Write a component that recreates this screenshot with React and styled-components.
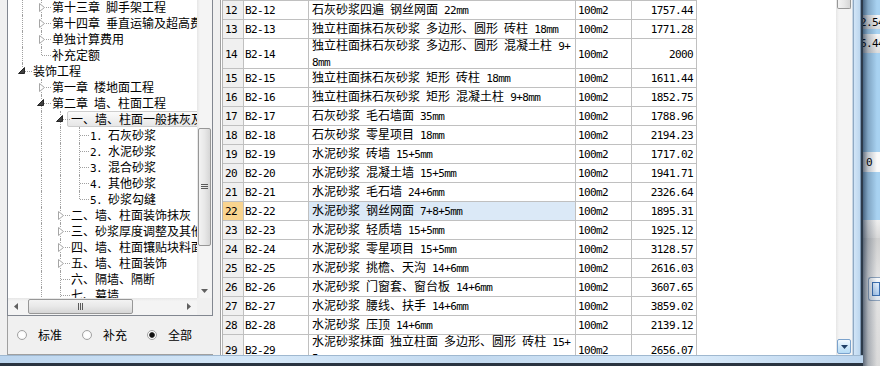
import React from "react";
import styled, { createGlobalStyle, css } from "styled-components";

const GlobalStyle = createGlobalStyle`
  html, body { margin: 0; padding: 0; }
  body {
    background: #f0f0f0;
    overflow: hidden;
    font-family: "Noto Sans CJK SC", "Liberation Sans", sans-serif;
    font-size: 12px;
    color: #000;
  }
`;

const HAN_SPLIT = /([\u2e80-\u9fff\uff00-\uffef]+)/;
const HAN_TEST = /^[\u2e80-\u9fff\uff00-\uffef]+$/;

const Han = styled.span`
  font-family: "Noto Sans CJK SC", sans-serif;
  font-size: 12px;
`;

const Latin = styled.span`
  font-family: "DejaVu Sans Mono", "Liberation Mono", monospace;
  font-size: 11px;
  letter-spacing: -0.6px;
  white-space: pre;
`;

function Mixed({ text }) {
  return text
    .split(HAN_SPLIT)
    .filter(Boolean)
    .map((run, i) =>
      HAN_TEST.test(run) ? <Han key={i}>{run}</Han> : <Latin key={i}>{run}</Latin>
    );
}

/* ---------- window frame ---------- */

const Screen = styled.div`
  display: flex;
  width: 880px;
  height: 366px;
  overflow: hidden;
`;

const Dialog = styled.div`
  display: flex;
  flex-direction: column;
  flex: none;
  width: 863px;
`;

const Body = styled.div`
  display: flex;
  height: 355px;
`;

const Client = styled.div`
  display: flex;
  width: 853px;
  background: #f0f0f0;
`;

const RightFrame = styled.div`
  width: 10px;
  background: linear-gradient(
    to right,
    #8fa9c4 0 1px,
    #d2e5f7 1px,
    #bcd6ee 7px,
    #7d98b4 7px 8px,
    #2c3a4a 8px
  );
`;

const BottomFrame = styled.div`
  height: 11px;
  background:
    linear-gradient(to bottom, #9fb8d0 0 1px, transparent 1px 8px, #2a3441 8px),
    linear-gradient(to right, #bcd5ee, #d6e8f8 30%, #c2d9ef 55%, #d9eaf9 80%, #bcd5ee);
`;

/* ---------- left tree panel ---------- */

const LeftPanel = styled.div`
  display: flex;
  flex-direction: column;
  flex: none;
  width: 213px;
  padding-left: 7px;
  box-sizing: border-box;
`;

const TreeBox = styled.div`
  display: flex;
  flex-direction: column;
  height: 316px;
  border: 1px solid #828790;
  border-top: none;
  box-sizing: border-box;
  background: #fff;
`;

const TreeBody = styled.div`
  display: flex;
  height: 298px;
`;

const TreeView = styled.div`
  flex: 1;
  overflow: hidden;
`;

const TreeList = styled.div`
  margin-top: -1px;
  padding-left: 5px;
`;

const TreeRow = styled.div`
  display: flex;
  height: 16px;
  white-space: nowrap;
`;

const Guide = styled.span`
  position: relative;
  flex: none;
  width: 19px;
  ${(p) =>
    p.$line &&
    css`
      &::before {
        content: "";
        position: absolute;
        left: 9px;
        top: 0;
        bottom: 0;
        border-left: 1px dotted #a0a0a0;
      }
    `}
`;

const Joint = styled.span`
  position: relative;
  flex: none;
  width: 19px;
  &::before {
    content: "";
    position: absolute;
    left: 9px;
    top: 0;
    bottom: ${(p) => (p.$last ? "8px" : "0")};
    border-left: 1px dotted #a0a0a0;
  }
  &::after {
    content: "";
    position: absolute;
    left: 10px;
    top: 8px;
    width: 9px;
    border-top: 1px dotted #a0a0a0;
  }
`;

const Expander = styled.span`
  position: absolute;
  z-index: 1;
  left: ${(p) => (p.$open ? "5px" : "7px")};
  top: 4px;
  display: flex;
  background: #fff;
`;

const Label = styled.span`
  display: block;
  height: 16px;
  line-height: 15px;
  padding: 0 2px 0 1px;
  box-sizing: border-box;
  ${(p) =>
    p.$selected &&
    css`
      margin-left: -3px;
      padding-left: 3px;
      border: 1px solid #cdcdcd;
      border-radius: 2px;
      line-height: 13px;
      background: linear-gradient(#fbfbfb, #e6e6e6);
    `}
`;

const ScrollV = styled.div`
  display: flex;
  flex-direction: column;
  flex: none;
  width: ${(p) => p.$w}px;
  background: linear-gradient(to right, #e6e6e6, #f4f4f4 3px, #f4f4f4);
`;

const ThumbV = styled.div`
  margin: ${(p) => p.$top}px 1px 0;
  height: ${(p) => p.$h}px;
  box-sizing: border-box;
  border: 1px solid #979797;
  border-radius: ${(p) => (p.$top === 0 ? "0 0 2px 2px" : "2px")};
  ${(p) => p.$top === 0 && "border-top: none;"}
  background: linear-gradient(to right, #f3f3f3, #e8e8e8 50%, #d6d6d6);
  display: flex;
  align-items: center;
  justify-content: center;
`;

const ArrowBtn = styled.div`
  display: flex;
  align-items: center;
  justify-content: center;
  flex: none;
  width: ${(p) => p.$w || 15}px;
  height: ${(p) => p.$h || 15}px;
  margin-top: ${(p) => (p.$push ? "auto" : "0")};
  box-sizing: border-box;
  ${(p) =>
    p.$hot &&
    css`
      margin: auto 1px 1px;
      width: 14px;
      border: 1px solid #7ba2cc;
      border-radius: 2px;
      background: linear-gradient(#f4fafe, #cfe8f9 50%, #b6dcf6);
    `}
`;

const HBarRow = styled.div`
  display: flex;
  height: 17px;
`;

const ScrollH = styled.div`
  display: flex;
  align-items: center;
  flex: 1;
  background: linear-gradient(#e6e6e6, #f4f4f4 3px, #f4f4f4);
`;

const ThumbH = styled.div`
  display: flex;
  align-items: center;
  justify-content: center;
  margin-left: 4px;
  width: 105px;
  height: 15px;
  box-sizing: border-box;
  border: 1px solid #979797;
  border-radius: 2px;
  background: linear-gradient(#f3f3f3, #e8e8e8 50%, #d6d6d6);
`;

const Corner = styled.div`
  width: 15px;
  background: #f0f0f0;
`;

const RadioBar = styled.div`
  display: flex;
  align-items: center;
  flex: 1;
  padding-left: 9px;
  border-left: 1px solid #a0a0a0;
  border-bottom: 1px solid #a0a0a0;
`;

const RadioItem = styled.label`
  display: flex;
  align-items: center;
  gap: 11px;
  width: 65px;
  line-height: 16px;
`;

const RadioDot = styled.span`
  width: 10px;
  height: 10px;
  box-sizing: border-box;
  border-radius: 50%;
  border: 1px solid #a2a2a2;
  background: ${(p) =>
    p.$checked
      ? "radial-gradient(circle, #111 0 2px, #555 2.6px, #fff 3.2px)"
      : "radial-gradient(circle, #fff 0 2px, #f0f0f0)"};
`;

/* ---------- splitter + grid ---------- */

const Splitter = styled.div`
  width: 7px;
  flex: none;
`;

const GridPanel = styled.div`
  display: flex;
  flex: 1;
  border-right: 1px solid #c9d6e3;
`;

const GridView = styled.div`
  width: 616px;
  box-sizing: border-box;
  padding-left: 1px;
  border-left: 1px solid #a0a0a0;
  background: #fff;
  overflow: hidden;
`;

const Table = styled.div`
  width: fit-content;
  border-left: 1px solid #b4b4b4;
  border-top: 1px solid #c0c0c0;
`;

const GridRow = styled.div`
  display: flex;
  height: ${(p) => (p.$tall ? 29 : 18)}px;
  border-bottom: 1px solid #c0c0c0;
`;

const Cell = styled.div`
  display: flex;
  flex-direction: column;
  justify-content: center;
  align-items: ${(p) => (p.$right ? "flex-end" : "flex-start")};
  flex: none;
  width: ${(p) => p.$w}px;
  box-sizing: border-box;
  padding: 0 ${(p) => (p.$right ? 3 : 0)}px 0 ${(p) => p.$pad || 0}px;
  border-right: 1px solid #c0c0c0;
  overflow: hidden;
  white-space: nowrap;
  background: ${(p) => p.$bg || "transparent"};
`;

const Line = styled.span`
  display: block;
  line-height: 14px;
`;

/* ---------- the window behind ---------- */

const Behind = styled.div`
  position: relative;
  display: flex;
  flex-direction: column;
  flex: 1;
  overflow: hidden;
  &::after {
    content: "";
    position: absolute;
    inset: 0;
    background: linear-gradient(
      to right,
      rgba(8, 28, 55, 0.6),
      rgba(8, 28, 55, 0.25) 5px,
      rgba(8, 28, 55, 0) 14px
    );
    pointer-events: none;
  }
`;

const BehindPart = styled.div`
  display: flex;
  flex-direction: column;
  height: ${(p) => (p.$h ? `${p.$h}px` : "auto")};
  flex: ${(p) => (p.$h ? "none" : "1")};
  background: ${(p) => p.$bg};
`;

const BehindCell = styled.div`
  margin-top: ${(p) => p.$gap}px;
  height: ${(p) => p.$h}px;
  display: flex;
  align-items: center;
  text-indent: -3px;
  overflow: hidden;
  white-space: nowrap;
  background: ${(p) => p.$bg || "linear-gradient(#f6f6f6, #dcdcdc)"};
`;

const BehindButton = styled.div`
  margin: 5px 0 0 5px;
  height: 22px;
  border: 1px solid #8da2bb;
  border-right: none;
  border-radius: 3px 0 0 3px;
  background: linear-gradient(#f7f9fb, #dfe6ee);
  display: flex;
  align-items: center;
  padding-left: 3px;
`;

const BlueBox = styled.span`
  width: 12px;
  height: 12px;
  border: 1px solid #3c6fb0;
  background: linear-gradient(#e2eefb, #a8c8ec);
`;

/* ---------- icons ---------- */

const Closed = () => (
  <svg width="6" height="9" viewBox="0 0 6 9">
    <path d="M0.5 0.5 L5.5 4.5 L0.5 8.5 Z" fill="#fff" stroke="#a6a6a6" />
  </svg>
);

const Open = () => (
  <svg width="7" height="7" viewBox="0 0 7 7">
    <path d="M6.5 0.5 L6.5 6.5 L0.5 6.5 Z" fill="#404040" stroke="#262626" />
  </svg>
);

const Tri = ({ dir, color = "#4d4d4d" }) => {
  const d = {
    down: "M0 0 L7 0 L3.5 4 Z",
    left: "M4 0 L4 7 L0 3.5 Z",
    right: "M0 0 L0 7 L4 3.5 Z",
  }[dir];
  const w = dir === "down" ? 7 : 4;
  const h = dir === "down" ? 4 : 7;
  return (
    <svg width={w} height={h} viewBox={`0 0 ${w} ${h}`}>
      <path d={d} fill={color} />
    </svg>
  );
};

const GripV = () => (
  <svg width="7" height="6" viewBox="0 0 7 6">
    <path d="M0 0.5H7M0 2.5H7M0 4.5H7" stroke="#5a5a5a" />
  </svg>
);

const GripH = () => (
  <svg width="6" height="7" viewBox="0 0 6 7">
    <path d="M0.5 0V7M2.5 0V7M4.5 0V7" stroke="#5a5a5a" />
  </svg>
);

/* ---------- data ---------- */

const treeItems = [
  { text: "第十三章 脚手架工程", guides: [true], state: "closed" },
  { text: "第十四章 垂直运输及超高费", guides: [true], state: "closed" },
  { text: "单独计算费用", guides: [true], state: "closed" },
  { text: "补充定额", guides: [true], last: true },
  { text: "装饰工程", guides: [], state: "open", last: true },
  { text: "第一章 楼地面工程", guides: [false], state: "closed" },
  { text: "第二章 墙、柱面工程", guides: [false], state: "open" },
  { text: "一、墙、柱面一般抹灰及其他", guides: [false, true], state: "open", selected: true },
  { text: "1. 石灰砂浆", guides: [false, true, true] },
  { text: "2. 水泥砂浆", guides: [false, true, true] },
  { text: "3. 混合砂浆", guides: [false, true, true] },
  { text: "4. 其他砂浆", guides: [false, true, true] },
  { text: "5. 砂浆勾缝", guides: [false, true, true], last: true },
  { text: "二、墙、柱面装饰抹灰", guides: [false, true], state: "closed" },
  { text: "三、砂浆厚度调整及其他", guides: [false, true], state: "closed" },
  { text: "四、墙、柱面镶贴块料面层", guides: [false, true], state: "closed" },
  { text: "五、墙、柱面装饰", guides: [false, true], state: "closed" },
  { text: "六、隔墙、隔断", guides: [false, true] },
  { text: "七、幕墙", guides: [false, true] },
];

const rows = [
  ["12", "B2-12", ["石灰砂浆四遍 钢丝网面 22mm"], "1757.44"],
  ["13", "B2-13", ["独立柱面抹石灰砂浆 多边形、圆形 砖柱 18mm"], "1771.28"],
  ["14", "B2-14", ["独立柱面抹石灰砂浆 多边形、圆形 混凝土柱 9+", "8mm"], "2000"],
  ["15", "B2-15", ["独立柱面抹石灰砂浆 矩形 砖柱 18mm"], "1611.44"],
  ["16", "B2-16", ["独立柱面抹石灰砂浆 矩形 混凝土柱 9+8mm"], "1852.75"],
  ["17", "B2-17", ["石灰砂浆 毛石墙面 35mm"], "1788.96"],
  ["18", "B2-18", ["石灰砂浆 零星项目 18mm"], "2194.23"],
  ["19", "B2-19", ["水泥砂浆 砖墙 15+5mm"], "1717.02"],
  ["20", "B2-20", ["水泥砂浆 混凝土墙 15+5mm"], "1941.71"],
  ["21", "B2-21", ["水泥砂浆 毛石墙 24+6mm"], "2326.64"],
  ["22", "B2-22", ["水泥砂浆 钢丝网面 7+8+5mm"], "1895.31"],
  ["23", "B2-23", ["水泥砂浆 轻质墙 15+5mm"], "1925.12"],
  ["24", "B2-24", ["水泥砂浆 零星项目 15+5mm"], "3128.57"],
  ["25", "B2-25", ["水泥砂浆 挑檐、天沟 14+6mm"], "2616.03"],
  ["26", "B2-26", ["水泥砂浆 门窗套、窗台板 14+6mm"], "3607.65"],
  ["27", "B2-27", ["水泥砂浆 腰线、扶手 14+6mm"], "3859.02"],
  ["28", "B2-28", ["水泥砂浆 压顶 14+6mm"], "2139.12"],
  ["29", "B2-29", ["水泥砂浆抹面 独立柱面 多边形、圆形 砖柱 15+", "5mm"], "2656.07"],
];

const CURRENT = "22";

/* ---------- parts ---------- */

function TreeItem({ item }) {
  return (
    <TreeRow>
      {item.guides.map((on, i) => (
        <Guide key={i} $line={on} />
      ))}
      <Joint $last={item.last}>
        {item.state && (
          <Expander $open={item.state === "open"}>
            {item.state === "open" ? <Open /> : <Closed />}
          </Expander>
        )}
      </Joint>
      <Label $selected={item.selected}>
        <Mixed text={item.text} />
      </Label>
    </TreeRow>
  );
}

function TreePanel() {
  return (
    <LeftPanel>
      <TreeBox>
        <TreeBody>
          <TreeView>
            <TreeList>
              {treeItems.map((item, i) => (
                <TreeItem key={i} item={item} />
              ))}
            </TreeList>
          </TreeView>
          <ScrollV $w={15}>
            <ThumbV $top={128} $h={118}>
              <GripV />
            </ThumbV>
            <ArrowBtn $push>
              <Tri dir="down" color="#606060" />
            </ArrowBtn>
          </ScrollV>
        </TreeBody>
        <HBarRow>
          <ScrollH>
            <ArrowBtn $w={16}>
              <Tri dir="left" color="#606060" />
            </ArrowBtn>
            <ThumbH>
              <GripH />
            </ThumbH>
            <ArrowBtn $w={16} $push style={{ marginLeft: "auto", marginTop: 0 }}>
              <Tri dir="right" color="#606060" />
            </ArrowBtn>
          </ScrollH>
          <Corner />
        </HBarRow>
      </TreeBox>
      <RadioBar>
        <RadioItem>
          <RadioDot />
          <Han>标准</Han>
        </RadioItem>
        <RadioItem>
          <RadioDot />
          <Han>补充</Han>
        </RadioItem>
        <RadioItem>
          <RadioDot $checked />
          <Han>全部</Han>
        </RadioItem>
      </RadioBar>
    </LeftPanel>
  );
}

function QuotaGrid() {
  return (
    <GridPanel>
      <GridView>
        <Table>
          {rows.map(([no, code, desc, price]) => {
            const current = no === CURRENT;
            return (
              <GridRow key={no} $tall={desc.length > 1}>
                <Cell $w={21} $pad={2} $bg={current ? "#f9d48f" : "#f0f0f0"}>
                  <Line>
                    <Mixed text={no} />
                  </Line>
                </Cell>
                <Cell $w={65} $pad={1}>
                  <Line>
                    <Mixed text={code} />
                  </Line>
                </Cell>
                <Cell $w={267} $pad={3} $bg={current ? "#dbe9f7" : undefined}>
                  {desc.map((l, i) => (
                    <Line key={i}>
                      <Mixed text={l} />
                    </Line>
                  ))}
                </Cell>
                <Cell $w={56} $pad={2}>
                  <Line>
                    <Mixed text="100m2" />
                  </Line>
                </Cell>
                <Cell $w={65} $right>
                  <Line>
                    <Mixed text={price} />
                  </Line>
                </Cell>
              </GridRow>
            );
          })}
        </Table>
      </GridView>
      <ScrollV $w={16}>
        <ThumbV $top={0} $h={9} />
        <ArrowBtn $hot>
          <Tri dir="down" color="#1f3f66" />
        </ArrowBtn>
      </ScrollV>
    </GridPanel>
  );
}

function BehindWindow() {
  return (
    <Behind>
      <BehindPart $h={238} $bg="#a8d2f1">
        <BehindCell $gap={15} $h={14}>
          <Latin>2.54</Latin>
        </BehindCell>
        <BehindCell $gap={5} $h={19}>
          <Latin>6.44</Latin>
        </BehindCell>
        <BehindCell $gap={99} $h={20} $bg="#fafafa">
          <Latin> 0</Latin>
        </BehindCell>
        <BehindCell $gap={48} $h={18} $bg="linear-gradient(#efefef, #d8d8d8)" />
      </BehindPart>
      <BehindPart $bg="linear-gradient(#cfcfcf, #e4e4e4 40px, #dadada)">
        <BehindButton style={{ marginTop: 39 }}>
          <BlueBox />
        </BehindButton>
      </BehindPart>
    </Behind>
  );
}

export default function App() {
  return (
    <Screen>
      <GlobalStyle />
      <Dialog>
        <Body>
          <Client>
            <TreePanel />
            <Splitter />
            <QuotaGrid />
          </Client>
          <RightFrame />
        </Body>
        <BottomFrame />
      </Dialog>
      <BehindWindow />
    </Screen>
  );
}
